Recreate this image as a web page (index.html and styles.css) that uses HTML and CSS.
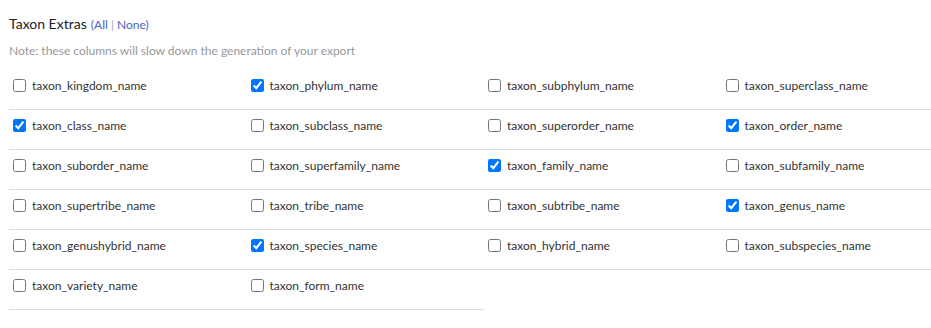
FILE: index.html
```html
<!DOCTYPE html>
<html lang="en">
<head>
  <meta charset="UTF-8">
  <title>Taxon Extras</title>
  <link rel="stylesheet" href="styles.css">
</head>
<body>
<div class="export-panel">

  <div class="section-head">
    <span class="section-title">Taxon Extras</span>
    <span class="toggles">(<a href="#" class="toggle">All</a> <span class="sep">|</span> <a href="#" class="toggle">None</a>)</span>
  </div>
  <div class="note">Note: these columns will slow down the generation of your export</div>

  <div class="field-grid">
    <label class="field"><input type="checkbox"> taxon_kingdom_name</label>
    <label class="field"><input type="checkbox" checked> taxon_phylum_name</label>
    <label class="field"><input type="checkbox"> taxon_subphylum_name</label>
    <label class="field"><input type="checkbox"> taxon_superclass_name</label>

    <label class="field"><input type="checkbox" checked> taxon_class_name</label>
    <label class="field"><input type="checkbox"> taxon_subclass_name</label>
    <label class="field"><input type="checkbox"> taxon_superorder_name</label>
    <label class="field"><input type="checkbox" checked> taxon_order_name</label>

    <label class="field"><input type="checkbox"> taxon_suborder_name</label>
    <label class="field"><input type="checkbox"> taxon_superfamily_name</label>
    <label class="field"><input type="checkbox" checked> taxon_family_name</label>
    <label class="field"><input type="checkbox"> taxon_subfamily_name</label>

    <label class="field"><input type="checkbox"> taxon_supertribe_name</label>
    <label class="field"><input type="checkbox"> taxon_tribe_name</label>
    <label class="field"><input type="checkbox"> taxon_subtribe_name</label>
    <label class="field"><input type="checkbox" checked> taxon_genus_name</label>

    <label class="field"><input type="checkbox"> taxon_genushybrid_name</label>
    <label class="field"><input type="checkbox" checked> taxon_species_name</label>
    <label class="field"><input type="checkbox"> taxon_hybrid_name</label>
    <label class="field"><input type="checkbox"> taxon_subspecies_name</label>

    <label class="field"><input type="checkbox"> taxon_variety_name</label>
    <label class="field"><input type="checkbox"> taxon_form_name</label>
  </div>

</div>
</body>
</html>
```

FILE: styles.css
```css
*{ box-sizing:border-box; }
html,body{
  margin:0; padding:0;
  overflow:hidden;
  background:#fff;
  font-family:Lato, 'Liberation Sans', sans-serif;
  color:#333;
}

.export-panel{
  width:959px;
  padding:14px 0 0 9px;
}

/* ================= HEADER ================= */
.section-head{
  line-height:18px;
}
.section-title{
  font-size:14px;
  color:#222;
}
.toggles{
  font-size:12px;
  color:#4a5fc1;
}
.toggle{
  color:#4a5fc1;
  text-decoration:none;
}
.sep{ color:#9aa3c8; }

.note{
  margin-top:9px;
  font-size:12px;
  line-height:16px;
  color:#999;
}

/* ================= FIELDS ================= */
.field-grid{
  margin-top:11px;
  display:grid;
  grid-template-columns:repeat(4, 237.5px);
}
.field{
  display:flex; align-items:center;
  height:40px;
  padding-bottom:9px;
  border-bottom:1px solid #ddd;
  font-size:12px;
  color:#333;
  white-space:pre;
  cursor:pointer;
}
.field input{
  width:13px; height:13px;
  margin:0 3px 0 4px;
}
```
